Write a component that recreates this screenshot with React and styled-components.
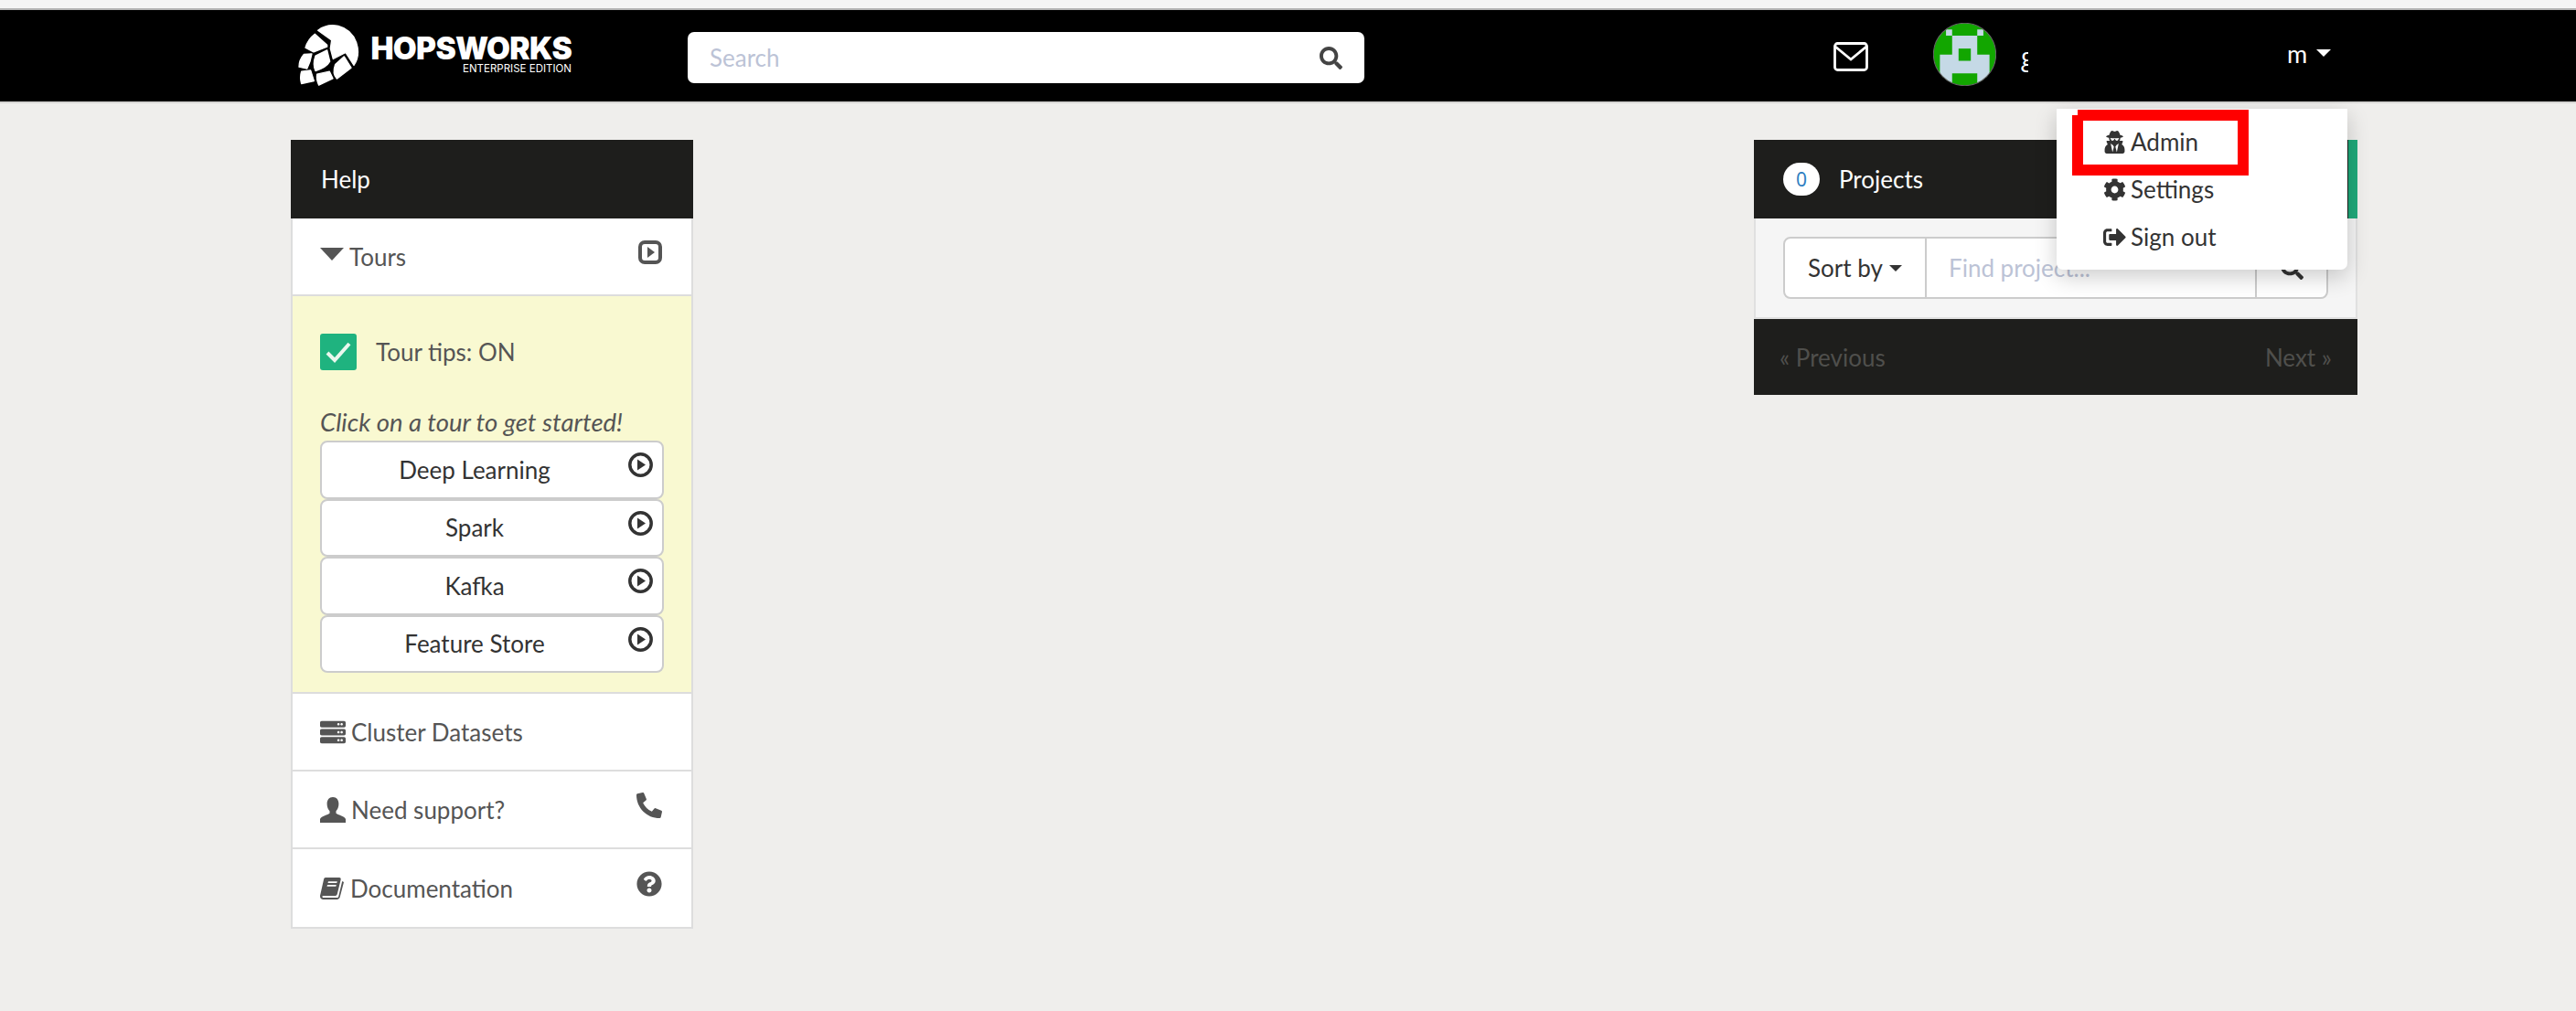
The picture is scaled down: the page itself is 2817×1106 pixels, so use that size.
import React from "react";
import styled, { createGlobalStyle } from "styled-components";
import {
  FaCog,
  FaPhoneAlt,
  FaQuestionCircle,
  FaSearch,
  FaServer,
  FaSignOutAlt,
  FaUserSecret,
} from "react-icons/fa";

const GlobalStyle = createGlobalStyle`
  html, body {
    margin: 0;
    padding: 0;
    background: #efeeec;
    font-family: "Lato", "Noto Sans", sans-serif;
    font-size: 26px;
    color: #555;
  }
  * { box-sizing: border-box; }
  input::placeholder { color: #bcc3d6; opacity: 1; }
`;

const Page = styled.div`
  min-height: 1106px;
  padding-top: 9px;
  background: #efeeec;
`;

const TopStrip = styled.div`
  position: absolute;
  top: 0;
  left: 0;
  right: 0;
  height: 9px;
  background: #f5f5f5;
`;

const Nav = styled.nav`
  position: relative;
  z-index: 5;
  height: 104px;
  padding-left: 325px;
  display: flex;
  align-items: center;
  background: #000;
  border-top: 2px solid #b4b4b4;
  border-bottom: 2px solid #d6d5d3;
  color: #fff;
`;

const Brand = styled.div`
  width: 427px;
  margin-bottom: 2px;
  display: flex;
  align-items: center;
  gap: 10px;
`;

const BrandText = styled.div`
  width: 220px;
  display: flex;
  flex-direction: column;
  align-items: flex-end;
  font-family: "Inter", sans-serif;
  color: #fff;
`;

const BrandName = styled.span`
  font-size: 33.5px;
  line-height: 29px;
  font-weight: 900;
  letter-spacing: -0.7px;
  white-space: nowrap;
`;

const BrandSub = styled.span`
  font-size: 11.5px;
  line-height: 14px;
  white-space: nowrap;
`;

const SearchBox = styled.div`
  width: 740px;
  height: 56px;
  margin-top: 4px;
  padding: 0 24px;
  display: flex;
  align-items: center;
  background: #fff;
  border-radius: 7px;
  color: #444;
  svg { font-size: 25px; }
`;

const SearchInput = styled.input`
  flex: 1;
  min-width: 0;
  border: 0;
  outline: 0;
  padding: 0;
  background: transparent;
  font: inherit;
`;

const MailIcon = styled.svg`
  width: 38px;
  height: 32px;
  margin: 2px 0 0 513px;
`;

const Avatar = styled.svg`
  width: 69px;
  height: 69px;
  margin: 0 0 3px 71px;
`;

const ClippedName = styled.span`
  width: 8px;
  margin-left: 27px;
  overflow: hidden;
  font-family: "Open Sans", sans-serif;
  font-size: 28px;
  line-height: 38px;
  color: #fff;
`;

const UserMenu = styled.div`
  margin-left: 283px;
  display: flex;
  align-items: center;
  gap: 10px;
  padding-bottom: 6px;
  font-size: 27px;
`;

const Caret = styled.span`
  width: 0;
  height: 0;
  border-left: 8px solid transparent;
  border-right: 8px solid transparent;
  border-top: 8px solid #fff;
`;

const Dropdown = styled.div`
  position: absolute;
  top: 108px;
  left: 2249px;
  width: 318px;
  padding: 10px 0;
  background: #fff;
  border-radius: 0 0 7px 7px;
  box-shadow: 0 8px 24px rgba(0, 0, 0, 0.2);
  color: #333;
`;

const DropdownItem = styled.div`
  height: 52px;
  padding-left: 51px;
  display: flex;
  align-items: center;
  gap: 5px;
  svg { font-size: 25px; flex: none; }
`;

const Callout = styled.div`
  position: absolute;
  top: 1px;
  left: 17px;
  width: 193px;
  height: 72px;
  border: 12px solid #ff0000;

  &::before {
    content: "";
    position: absolute;
    top: -12px;
    left: -12px;
    width: 6px;
    height: 6px;
    background: #fff;
  }
`;

const Main = styled.main`
  padding: 40px 239px 0 318px;
  display: flex;
  justify-content: space-between;
  align-items: flex-start;
`;

const HelpColumn = styled.section`
  width: 440px;
`;

const ProjectColumn = styled.section`
  width: 660px;
`;

const PanelHeader = styled.header`
  height: 86px;
  padding-left: ${(p) => p.$pad || 33}px;
  display: flex;
  align-items: center;
  background: #1e1e1c;
  color: #fff;
  border-right: ${(p) => (p.$accent ? "10px solid #1fa97a" : "0")};
`;

const Badge = styled.span`
  width: 40px;
  height: 36px;
  margin-right: 21px;
  display: flex;
  align-items: center;
  justify-content: center;
  background: #fff;
  border-radius: 18px;
  color: #2f7fc1;
  font-family: "Noto Sans", sans-serif;
  font-size: 21px;
`;

const HelpList = styled.div`
  background: #fff;
  border: 2px solid #dddddd;
  border-top: 0;
`;

const Row = styled.div`
  height: 85px;
  padding: 0 32px 0 30px;
  display: flex;
  align-items: center;
  border-bottom: 2px solid #dddddd;
  &:last-child { border-bottom: 0; }
  svg { flex: none; }
`;

const RowLabel = styled.span`
  flex: 1;
  display: flex;
  align-items: center;
  gap: ${(p) => p.$gap || 6}px;
`;

const RowIcon = styled.span`
  display: flex;
  margin-bottom: 10px;
  font-size: 28px;
  color: #555;
`;

const Triangle = styled.span`
  width: 0;
  height: 0;
  margin-bottom: 6px;
  border-left: 13px solid transparent;
  border-right: 13px solid transparent;
  border-top: 14px solid #555;
`;

const ToursBody = styled.div`
  height: 435px;
  padding: 41px 30px 0;
  background: #f9f9d1;
  border-bottom: 2px solid #dddddd;
`;

const TipsRow = styled.div`
  display: flex;
  align-items: center;
  gap: 21px;
`;

const Checkbox = styled.span`
  width: 40px;
  height: 40px;
  display: flex;
  align-items: center;
  justify-content: center;
  background: #1fb37f;
  border-radius: 3px;
`;

const Hint = styled.p`
  margin: 37px 0 0;
  height: 40px;
  font-size: 27.5px;
  font-style: italic;
  line-height: 40px;
  white-space: nowrap;
`;

const TourList = styled.div`
  display: flex;
  flex-direction: column;
`;

const TourButton = styled.div`
  position: relative;
  width: 376px;
  height: 63.5px;
  padding-right: 38px;
  display: flex;
  align-items: center;
  justify-content: center;
  background: #fff;
  border: 2px solid #cccccc;
  border-radius: 8px;
  color: #333;
`;

const PlayBadge = styled.svg`
  position: absolute;
  top: 11px;
  right: 10px;
  width: 27px;
  height: 27px;
`;

const ProjectsBody = styled.div`
  height: 110px;
  padding: 20px 30px 0;
  background: #f5f5f5;
  border: 2px solid #e0e0e0;
  border-top: 0;
`;

const InputGroup = styled.div`
  width: 596px;
  height: 68px;
  display: flex;
  background: #fff;
  border: 2px solid #cccccc;
  border-radius: 8px;
  color: #333;
`;

const SortButton = styled.div`
  width: 155px;
  display: flex;
  align-items: center;
  justify-content: center;
  gap: 7px;
  border-right: 2px solid #cccccc;
`;

const DarkCaret = styled(Caret)`
  border-left-width: 7px;
  border-right-width: 7px;
  border-top: 7px solid #333;
`;

const FindInput = styled.input`
  flex: 1;
  min-width: 0;
  padding: 0 0 0 24px;
  border: 0;
  outline: 0;
  background: transparent;
  font: inherit;
`;

const SearchButton = styled.div`
  width: 78px;
  display: flex;
  align-items: center;
  justify-content: center;
  border-left: 2px solid #cccccc;
  font-size: 25px;
`;

const Pager = styled.footer`
  height: 83px;
  padding: 0 28px;
  display: flex;
  align-items: center;
  justify-content: space-between;
  background: #1e1e1c;
  color: #4f4f4c;
`;

const HopLogo = () => (
  <svg width="70" height="70" viewBox="72 45 210 207" fill="#fff" stroke="#fff" strokeWidth="4" strokeLinejoin="round">
    <path d="M140 68Q170 46 207 54Q250 65 266 108Q280 150 258 183L231 141L190 162L181 128L185 100Z" />
    <path d="M130 80L170 116V122L126 139L99 125Q107 97 130 80Z" />
    <path d="M94 147L120 145L114 170L104 194L78 188Q78 165 94 147Z" />
    <path d="M170 133L179 170Q168 190 132 201Q122 180 132 152Z" />
    <path d="M226 154L249 191L202 227Q186 210 197 180Z" />
    <path d="M86 203L116 199L127 234L86 243Q80 222 86 203Z" />
    <path d="M137 212L178 203L189 226L143 248Q134 230 137 212Z" />
  </svg>
);

const PixelAvatar = () => (
  <Avatar viewBox="68 31 206 206">
    <defs>
      <clipPath id="avatarClip">
        <circle cx="171" cy="134" r="102" />
      </clipPath>
    </defs>
    <g clipPath="url(#avatarClip)">
      <rect x="68" y="31" width="206" height="206" fill="#12a600" />
      <path
        fill="#c5d9e6"
        d="M110 53h20v20h-20zM212 53h20v20h-20zM130 73h82v62h40v102h-40v-41h-82v41h-40v-102h40z"
      />
      <rect x="151" y="115" width="40" height="40" fill="#12a600" />
    </g>
    <circle cx="171" cy="134" r="102" fill="none" stroke="#666" strokeWidth="3" />
  </Avatar>
);

const SquarePlayIcon = () => (
  <svg width="26" height="26" viewBox="0 0 26 26" fill="#555">
    <rect x="2" y="2" width="22" height="22" rx="5" fill="none" stroke="#555" strokeWidth="4" />
    <path d="M10 7l8 6-8 6z" />
  </svg>
);

const PersonIcon = () => (
  <svg width="28" height="28" viewBox="0 0 28 28" fill="#555">
    <path d="M14 0c4.200 0 6.400 3.200 6.400 7.400 0 3.200-1.200 6-2.900 7.800v2.600c1.600 1.700 9 2.900 10.500 6.200V28H0v-4c1.500-3.300 8.900-4.500 10.500-6.200v-2.600C8.800 13.400 7.600 10.600 7.600 7.400 7.600 3.200 9.800 0 14 0z" />
  </svg>
);

const BookIcon = () => (
  <svg width="26" height="24" viewBox="0 0 26 24" fill="#555">
    <path d="M6 0h15c1.500 0 2 1 1.600 2.500L18.800 18c-.4 1.400-1.200 2-2.800 2H3.600c-.9 0-1.300.5-1.100 1.200.2.600.7.900 1.500.9h14.500c.8 0 1.400-.4 1.700-1.400L24.200 4l1.800 1-4.300 16.500c-.5 1.600-1.700 2.500-3.300 2.500H3.500C1.500 24 0 22.500 0 20.500c0-.8.200-1.600.4-2.300L4 2.200C4.300.9 5 0 6 0zm3 4.200l-.5 1.800h9.800l.5-1.800zm-1 3.800l-.5 1.800h9.800l.5-1.800z" />
  </svg>
);

const tours = ["Deep Learning", "Spark", "Kafka", "Feature Store"];

export default function App() {
  return (
    <Page>
      <GlobalStyle />
      <TopStrip />
      <Nav>
        <Brand>
          <HopLogo />
          <BrandText>
            <BrandName>HOPSWORKS</BrandName>
            <BrandSub>ENTERPRISE EDITION</BrandSub>
          </BrandText>
        </Brand>
        <SearchBox>
          <SearchInput placeholder="Search" />
          <FaSearch />
        </SearchBox>
        <MailIcon viewBox="0 0 38 32" fill="none" stroke="#fff" strokeWidth="2.800">
          <rect x="1.500" y="1.500" width="35" height="29" rx="3" />
          <path d="M2 5l17 14L36 5" />
        </MailIcon>
        <PixelAvatar />
        <ClippedName>g</ClippedName>
        <UserMenu>
          m <Caret />
        </UserMenu>
        <Dropdown>
          <DropdownItem>
            <FaUserSecret />
            Admin
          </DropdownItem>
          <DropdownItem>
            <FaCog />
            Settings
          </DropdownItem>
          <DropdownItem>
            <FaSignOutAlt />
            Sign out
          </DropdownItem>
          <Callout />
        </Dropdown>
      </Nav>
      <Main>
        <HelpColumn>
          <PanelHeader>Help</PanelHeader>
          <HelpList>
            <Row>
              <RowLabel>
                <Triangle />
                Tours
              </RowLabel>
              <RowIcon>
                <SquarePlayIcon />
              </RowIcon>
            </Row>
            <ToursBody>
              <TipsRow>
                <Checkbox>
                  <svg width="28" height="24" viewBox="0 0 28 24" fill="none" stroke="#eaf7ee" strokeWidth="4">
                    <path d="M2 13l8 8L26 3" />
                  </svg>
                </Checkbox>
                Tour tips: ON
              </TipsRow>
              <Hint>Click on a tour to get started!</Hint>
              <TourList>
                {tours.map((name) => (
                  <TourButton key={name}>
                    {name}
                    <PlayBadge viewBox="0 0 27 27">
                      <circle cx="13.500" cy="13.500" r="11.700" fill="none" stroke="#333" strokeWidth="3.500" />
                      <path d="M10 7.500l9 6-9 6z" fill="#333" />
                    </PlayBadge>
                  </TourButton>
                ))}
              </TourList>
            </ToursBody>
            <Row>
              <RowLabel>
                <FaServer size={28} color="#555" />
                Cluster Datasets
              </RowLabel>
            </Row>
            <Row>
              <RowLabel>
                <PersonIcon />
                Need support?
              </RowLabel>
              <RowIcon>
                <FaPhoneAlt />
              </RowIcon>
            </Row>
            <Row>
              <RowLabel $gap={7}>
                <BookIcon />
                Documentation
              </RowLabel>
              <RowIcon>
                <FaQuestionCircle />
              </RowIcon>
            </Row>
          </HelpList>
        </HelpColumn>
        <ProjectColumn>
          <PanelHeader $pad={32} $accent>
            <Badge>0</Badge>
            Projects
          </PanelHeader>
          <ProjectsBody>
            <InputGroup>
              <SortButton>
                Sort by <DarkCaret />
              </SortButton>
              <FindInput placeholder="Find project..." />
              <SearchButton>
                <FaSearch />
              </SearchButton>
            </InputGroup>
          </ProjectsBody>
          <Pager>
            <span>« Previous</span>
            <span>Next »</span>
          </Pager>
        </ProjectColumn>
      </Main>
    </Page>
  );
}
